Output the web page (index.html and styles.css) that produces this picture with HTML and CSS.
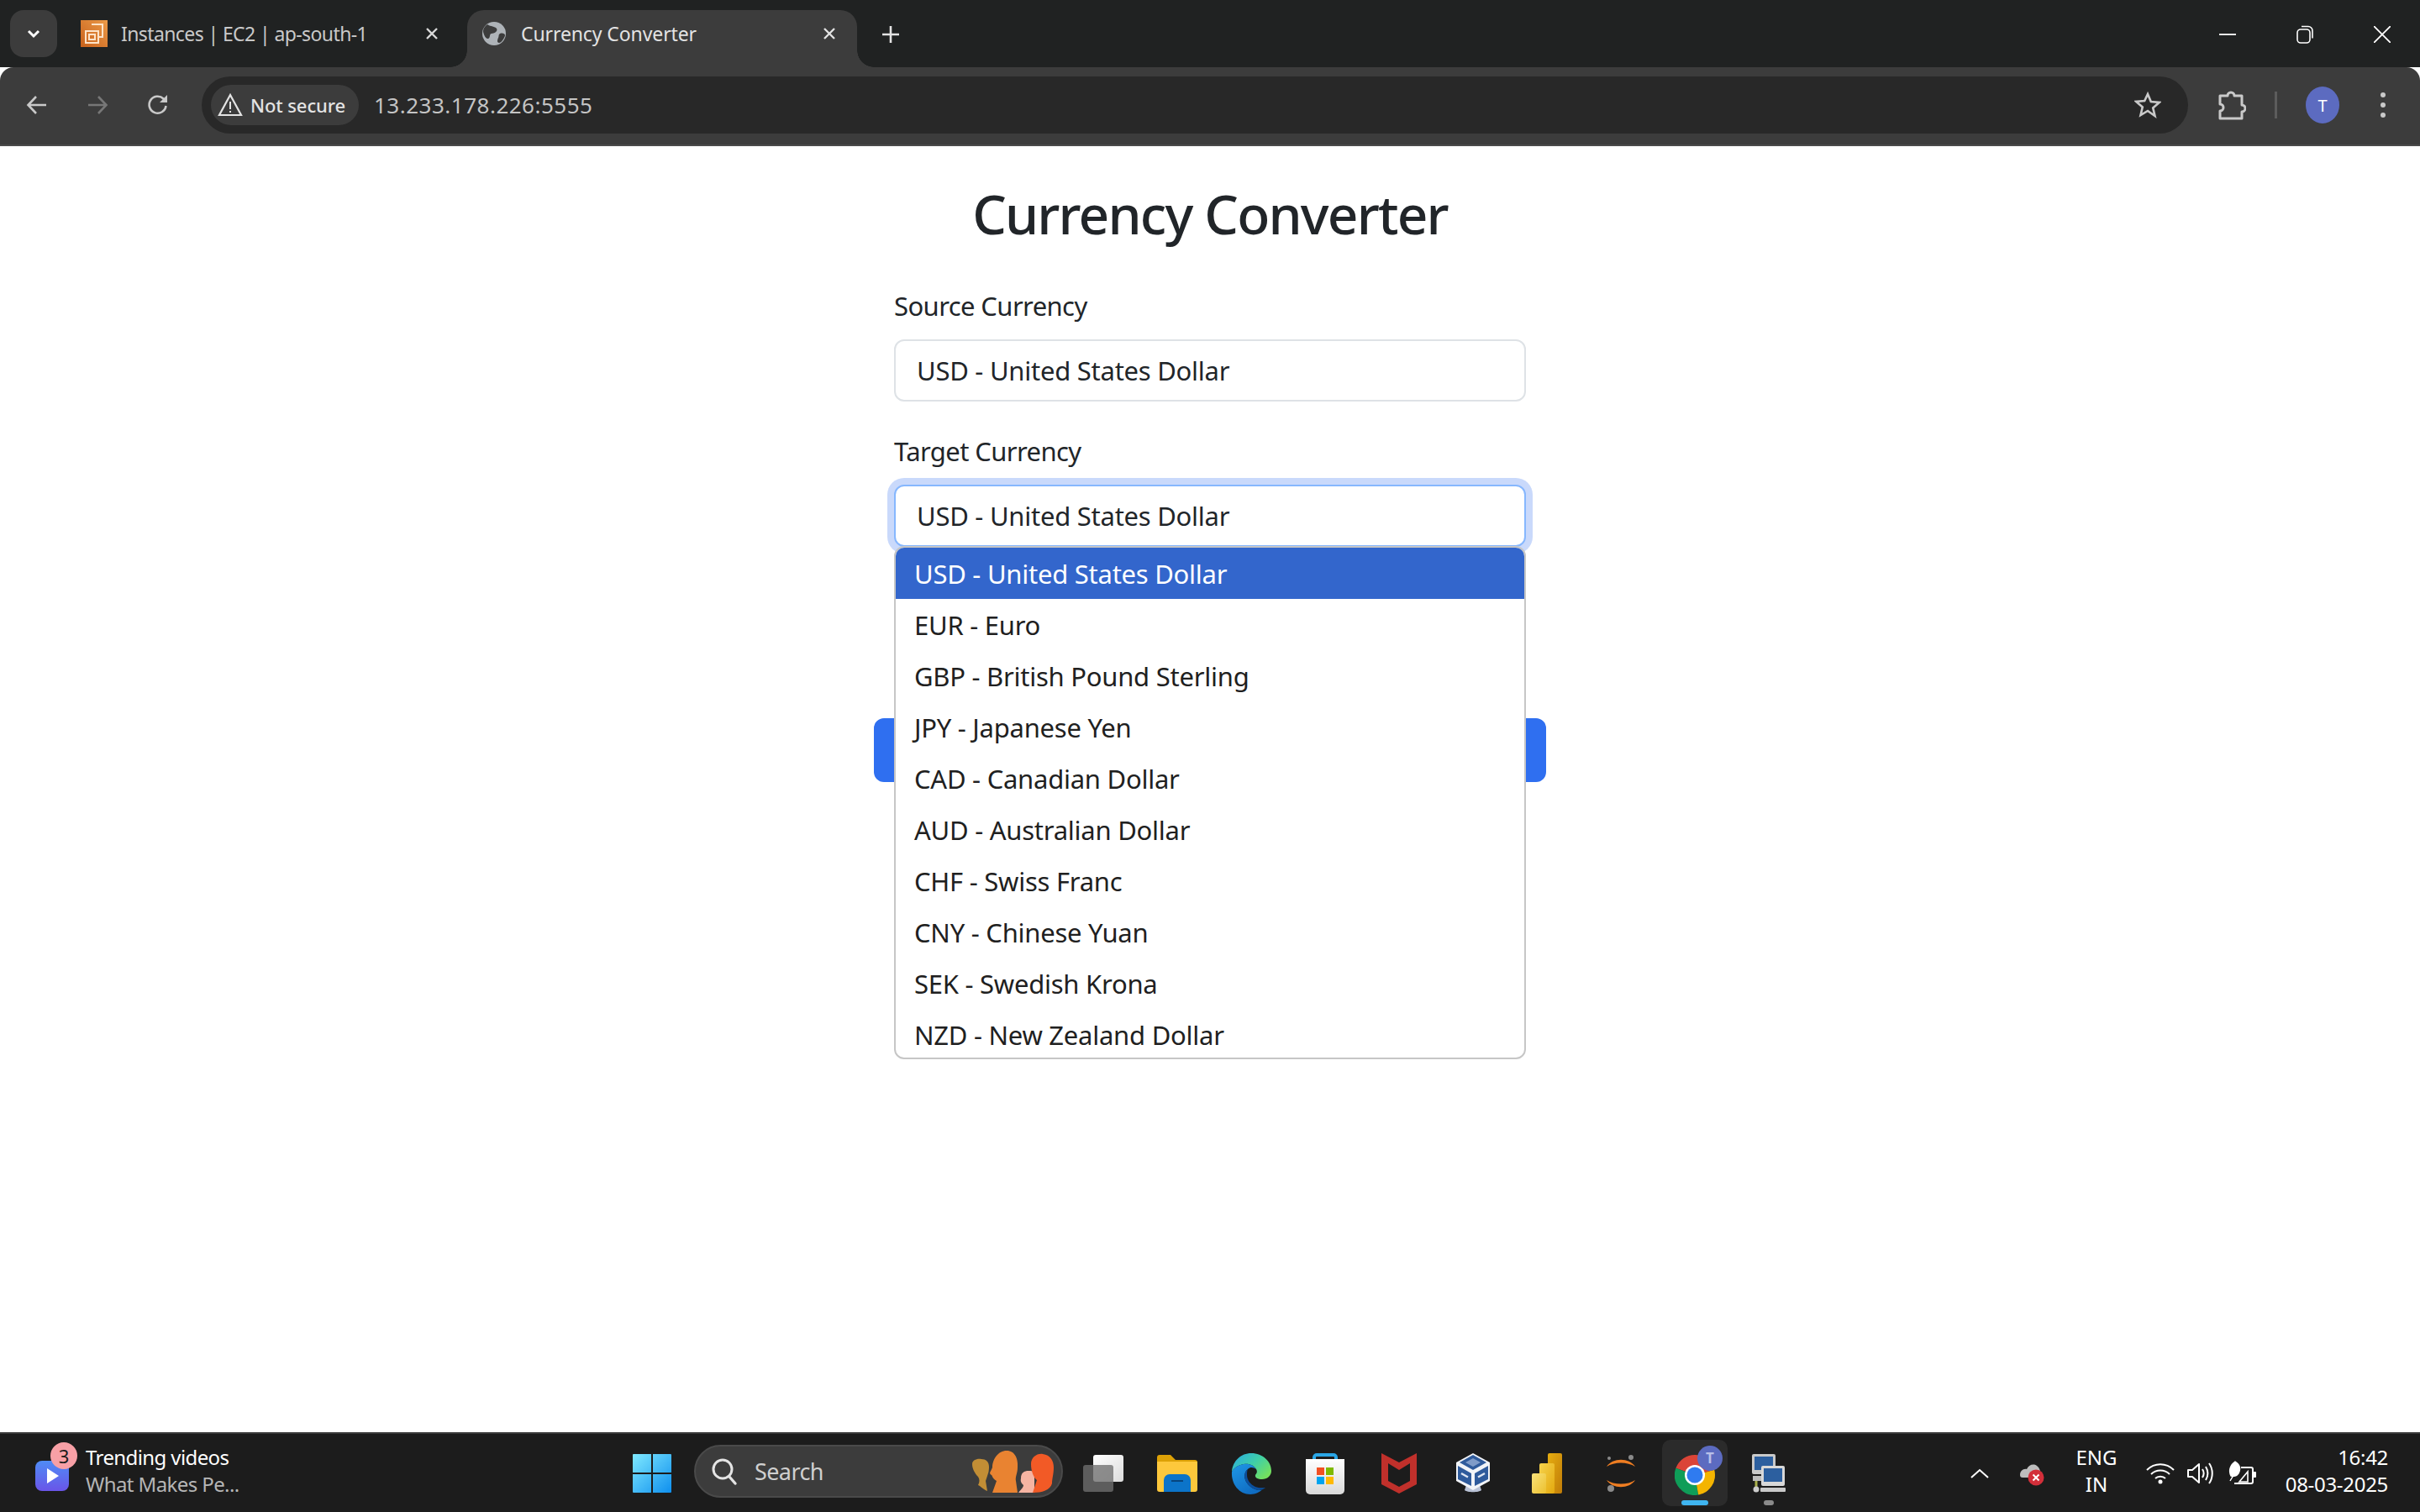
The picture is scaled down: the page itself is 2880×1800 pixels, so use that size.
FILE: index.html
```html
<!DOCTYPE html>
<html lang="en">
<head>
    <meta charset="UTF-8">
    <title>Currency Converter</title>
    <link rel="stylesheet" href="styles.css">
</head>
<body>
    <!-- browser tabs -->
    <div class="tabstrip">
        <div class="tab-search">
            <svg width="20" height="20" viewBox="0 0 20 20"><path d="M4 7l6 6 6-6" fill="none" stroke="#fff" stroke-width="3"/></svg>
        </div>
        <div class="tab">
            <svg width="32" height="32" viewBox="0 0 32 32">
                <defs><linearGradient id="aws" x1="0" y1="1" x2="1" y2="0"><stop offset="0" stop-color="#c8611b"/><stop offset="1" stop-color="#eb9a48"/></linearGradient></defs>
                <rect width="32" height="32" fill="url(#aws)"/>
                <path d="M13 5h13v15h-5M6 13h15v14H6z M10 17h7v6h-7z" fill="none" stroke="#fde3c8" stroke-width="2"/>
            </svg>
            <span class="tab-title">Instances | EC2 | ap-south-1</span>
            <svg class="tab-close" width="16" height="16" viewBox="0 0 16 16"><path d="M2 2l12 12M14 2L2 14" stroke="#d8d8d8" stroke-width="2.4"/></svg>
        </div>
        <div class="tab active">
            <svg width="28" height="28" viewBox="0 0 28 28">
                <circle cx="14" cy="14" r="14" fill="#aeb3b8"/>
                <path d="M6 3c4 3 9 2 11 5s-3 6-6 6-1 5-4 6-6-6-6-9 2-6 5-8zM21 14c3-1 6 0 6 2s-4 9-7 9-2-4-1-6 0-4 2-5z" fill="#3c3c3c"/>
            </svg>
            <span class="tab-title">Currency Converter</span>
            <svg class="tab-close" width="16" height="16" viewBox="0 0 16 16"><path d="M2 2l12 12M14 2L2 14" stroke="#e3e3e3" stroke-width="2.4"/></svg>
        </div>
        <div class="new-tab">
            <svg width="22" height="22" viewBox="0 0 22 22"><path d="M11 1v20M1 11h20" stroke="#e3e3e3" stroke-width="2.6"/></svg>
        </div>
        <div class="window-btns">
            <svg width="20" height="20" viewBox="0 0 20 20"><path d="M0 10h20" stroke="#fff" stroke-width="1.8"/></svg>
            <svg width="20" height="22" viewBox="0 0 20 22"><rect x="1" y="5" width="15" height="16" rx="4" fill="none" stroke="#fff" stroke-width="1.6"/><path d="M6 1.500h8a5 5 0 0 1 5 5v9" fill="none" stroke="#fff" stroke-width="1.6"/></svg>
            <svg width="20" height="20" viewBox="0 0 20 20"><path d="M0 0l20 20M20 0L0 20" stroke="#fff" stroke-width="1.8"/></svg>
        </div>
    </div>

    <!-- address bar -->
    <div class="toolbar">
        <div class="nav-btn">
            <svg width="26" height="26" viewBox="0 0 26 26"><path d="M24 13H3M12 3L2.500 13 12 23" fill="none" stroke="#c9c9c9" stroke-width="2.600"/></svg>
        </div>
        <div class="nav-btn">
            <svg width="26" height="26" viewBox="0 0 26 26"><path d="M2 13h21M14 3l9.500 10L14 23" fill="none" stroke="#777" stroke-width="2.600"/></svg>
        </div>
        <div class="nav-btn">
            <svg width="28" height="28" viewBox="0 0 28 28"><path d="M23.500 15a10 10 0 1 1-3-8.500L24 10" fill="none" stroke="#c9c9c9" stroke-width="2.600"/><path d="M25 2v9h-9z" fill="#c9c9c9"/></svg>
        </div>
        <div class="omnibox">
            <div class="chip">
                <svg width="30" height="28" viewBox="0 0 30 28"><path d="M15 2L2 26h26z" fill="none" stroke="#e3e3e3" stroke-width="2.200"/><path d="M15 10v9M15 21v2" stroke="#e3e3e3" stroke-width="2"/></svg>
                <span>Not secure</span>
            </div>
            <span class="url">13.233.178.226:5555</span>
            <svg class="star" width="32" height="32" viewBox="0 0 32 32"><path d="M16 3l3.800 9.100 9.900.8-7.500 6.500 2.300 9.600L16 23l-8.500 5 2.300-9.600-7.500-6.500 9.900-.8z" fill="none" stroke="#c9c9c9" stroke-width="2.600"/></svg>
        </div>
        <svg class="puzzle" width="34" height="36" viewBox="0 0 34 36"><path d="M3 7h9a4 4 0 1 1 8 0h9v11a4 4 0 1 1 0 8v8H3v-9a4 4 0 0 0 0-8z" fill="none" stroke="#c9c9c9" stroke-width="3" stroke-linejoin="round"/></svg>
        <div class="separator"></div>
        <div class="avatar">T</div>
        <div class="dots"><i></i><i></i><i></i></div>
    </div>

    <!-- the actual page -->
    <div class="page">
        <div class="container">
            <h1>Currency Converter</h1>
            <div class="field">
                <label>Source Currency</label>
                <div class="select">USD - United States Dollar</div>
            </div>
            <div class="field">
                <label>Target Currency</label>
                <div class="select focused">
                    USD - United States Dollar
                    <ul class="dropdown">
                        <li class="selected">USD - United States Dollar</li>
                        <li>EUR - Euro</li>
                        <li>GBP - British Pound Sterling</li>
                        <li>JPY - Japanese Yen</li>
                        <li>CAD - Canadian Dollar</li>
                        <li>AUD - Australian Dollar</li>
                        <li>CHF - Swiss Franc</li>
                        <li>CNY - Chinese Yuan</li>
                        <li>SEK - Swedish Krona</li>
                        <li>NZD - New Zealand Dollar</li>
                    </ul>
                </div>
            </div>
            <!-- third field and the button sit behind the open list -->
            <div class="field">
                <label class="covered"></label>
                <div class="select"></div>
            </div>
            <button class="convert"></button>
        </div>
    </div>

    <!-- windows taskbar -->
    <div class="taskbar">
        <div class="widgets">
            <div class="widget-icon">
                <svg width="40" height="36" viewBox="0 0 40 36">
                    <defs><linearGradient id="wid" x1="0" y1="0" x2="0" y2="1"><stop offset="0" stop-color="#4f8cf5"/><stop offset="1" stop-color="#6a55e8"/></linearGradient></defs>
                    <rect width="40" height="36" rx="8" fill="url(#wid)"/>
                    <path d="M14 9l14 9-14 9z" fill="#fff"/>
                </svg>
                <span class="badge">3</span>
            </div>
            <div class="widget-text">
                <span>Trending videos</span>
                <span class="dim">What Makes Pe...</span>
            </div>
        </div>

        <div class="slot">
            <svg width="46" height="46" viewBox="0 0 46 46">
                <defs><linearGradient id="win" x1="0" y1="0" x2="1" y2="1"><stop offset="0" stop-color="#7fe9ff"/><stop offset="1" stop-color="#0e8fee"/></linearGradient></defs>
                <path d="M0 1a1 1 0 0 1 1-1h21v22H0zM24 0h21a1 1 0 0 1 1 1v21H24zM0 24h22v22H1a1 1 0 0 1-1-1zM24 24h22v21a1 1 0 0 1-1 1H24z" fill="url(#win)"/>
            </svg>
        </div>

        <div class="search">
            <svg width="32" height="34" viewBox="0 0 32 34"><circle cx="14" cy="14" r="11" fill="none" stroke="#e4e4e4" stroke-width="3"/><path d="M22 23l7 8" stroke="#e4e4e4" stroke-width="3.400" stroke-linecap="round"/></svg>
            <span>Search</span>
            <svg class="people" width="102" height="50" viewBox="0 0 102 50">
                <path d="M2 16c0-5 6-7 11-6 5 0 9 3 9 9 0 6-1 8-2 11l-2 6 2 12c-5-2-8-6-11-7 2-4 2-7 0-10-4-4-7-10-7-15z" fill="#c28e35"/>
                <path d="M26 20c0-10 7-20 17-20s14 10 13 20c0 7-3 11-2 16l2 14H26l5-14c-3-2-4-3-5-5 0-2-2-2-3-4 0-2 2-4 3-7z" fill="#e98331"/>
                <path d="M60 33c0-7 4-9 9-9 2 0 6 0 7 2v24H57c2-3 6-6 6-9-2-2-4-4-3-8z" fill="#f6b4a2"/>
                <path d="M72 16c0-8 7-13 14-12 9 1 13 8 13 16 0 8-2 13-2 19-2 8-12 11-23 11l5-15c-4-3-7-11-7-19z" fill="#f25a26"/>
            </svg>
        </div>

        <div class="slot">
            <svg width="48" height="44" viewBox="0 0 48 44">
                <defs><linearGradient id="tv" x1="0" y1="0" x2="1" y2="1"><stop offset="0" stop-color="#fff"/><stop offset="1" stop-color="#dcdcdc"/></linearGradient></defs>
                <rect x="12" width="36" height="32" rx="3" fill="url(#tv)"/>
                <rect y="12" width="36" height="32" rx="3" fill="#707070" fill-opacity=".78"/>
            </svg>
        </div>
        <div class="slot">
            <svg width="48" height="44" viewBox="0 0 48 44">
                <path d="M0 3a3 3 0 0 1 3-3h13l6 6h23a3 3 0 0 1 3 3v6H0z" fill="#dda106"/>
                <path d="M0 8h48v33a3 3 0 0 1-3 3H3a3 3 0 0 1-3-3z" fill="#fdc83c"/>
                <path d="M8 44V30a7 7 0 0 1 7-7h18a7 7 0 0 1 7 7v14z" fill="#0c74c9"/>
                <path d="M17 31h14" stroke="#07467f" stroke-width="2"/>
            </svg>
        </div>
        <div class="slot">
            <svg width="48" height="50" viewBox="0 0 48 50">
                <defs>
                    <linearGradient id="edgeA" x1="0" y1="0" x2="1" y2=".7"><stop offset="0" stop-color="#27a9e4"/><stop offset=".55" stop-color="#3fcfa8"/><stop offset="1" stop-color="#74e05e"/></linearGradient>
                    <linearGradient id="edgeB" x1="0" y1="0" x2=".6" y2="1"><stop offset="0" stop-color="#1f97e6"/><stop offset="1" stop-color="#0f6cc2"/></linearGradient>
                </defs>
                <path d="M1 23C2 10 12 1 24 1c14 0 24 10 24 21 0 6-5 10-11 10-5 0-9-2-8-5 1-2 3-3 1-7-3-5-9-7-15-6C9 15 4 18 1 23z" fill="url(#edgeA)"/>
                <path d="M1 23c3-5 8-8 14-9 6-1 12 1 15 6-3-2-7-3-10 0-4 3-5 9-2 15 3 5 8 9 15 10 2 0 4 0 5-1-4 3-9 6-15 6C10 50 0 38 1 23z" fill="url(#edgeB)"/>
                <path d="M20 20c-4 3-5 9-2 15 3 5 8 9 15 10 2 0 6-1 8-3-3 0-7 1-12-1-6-3-10-8-10-14 0-3 0-5 1-7z" fill="#0b4f9e"/>
                <path d="M16 26c0-5 4-8 9-7 3 1 5 3 4 7-5 0-8 0-13 0z" fill="#1c1c1c" fill-opacity="0"/>
            </svg>
        </div>
        <div class="slot">
            <svg width="46" height="50" viewBox="0 0 46 50">
                <defs><linearGradient id="bag" x1="0" y1="0" x2="0" y2="1"><stop offset="0" stop-color="#fff"/><stop offset="1" stop-color="#d9d9d9"/></linearGradient></defs>
                <path d="M10 10V6a3 3 0 0 1 3-3h20a3 3 0 0 1 3 3v4" fill="none" stroke="#2aa6e6" stroke-width="4"/>
                <path d="M0 8h46v37a5 5 0 0 1-5 5H5a5 5 0 0 1-5-5z" fill="url(#bag)"/>
                <rect x="13" y="18" width="9" height="9" fill="#f25022"/>
                <rect x="24" y="18" width="9" height="9" fill="#7fba00"/>
                <rect x="13" y="29" width="9" height="9" fill="#00a4ef"/>
                <rect x="24" y="29" width="9" height="9" fill="#ffb900"/>
            </svg>
        </div>
        <div class="slot">
            <svg width="42" height="48" viewBox="0 0 42 48"><path d="M0 0l21 11L42 0v37L21 48 0 37zM8 12v21l13 7 13-7V12L21 20z" fill="#c0302b" fill-rule="evenodd"/></svg>
        </div>
        <div class="slot">
            <svg width="40" height="48" viewBox="0 0 40 48">
                <path d="M12 38h16l2 6c-3 3-17 3-20 0z" fill="#b9c2d6"/>
                <path d="M20 0l20 11v22L20 44 0 33V11z" fill="#f2f4f8"/>
                <path d="M20 2l16 9-16 9-16-9z" fill="#2f5b9c"/>
                <path d="M20 6l9 5-9 5-9-5z" fill="#7f9bc8"/>
                <path d="M2 15l16 9v15L2 31zM38 15l-16 9v15l16-8z" fill="#2f5b9c"/>
                <path d="M6 24l8 4.500M26 28.500l8-4.500" stroke="#dfe6f2" stroke-width="2.500"/>
            </svg>
        </div>
        <div class="slot">
            <svg width="36" height="48" viewBox="0 0 36 48">
                <defs>
                    <linearGradient id="pbiA" x1="0" y1="0" x2="1" y2="1"><stop offset="0" stop-color="#e6ad10"/><stop offset="1" stop-color="#c07c08"/></linearGradient>
                    <linearGradient id="pbiB" x1="0" y1="0" x2="1" y2="1"><stop offset="0" stop-color="#f6d34c"/><stop offset="1" stop-color="#e3a80e"/></linearGradient>
                    <linearGradient id="pbiC" x1="0" y1="0" x2="1" y2="1"><stop offset="0" stop-color="#f9e27a"/><stop offset="1" stop-color="#ecc02e"/></linearGradient>
                </defs>
                <rect x="19" width="17" height="48" rx="2" fill="url(#pbiA)"/>
                <rect x="9" y="12" width="18" height="36" rx="2" fill="url(#pbiB)"/>
                <rect y="24" width="17" height="24" rx="2" fill="url(#pbiC)"/>
            </svg>
        </div>
        <div class="slot">
            <svg width="36" height="44" viewBox="0 0 36 44">
                <path d="M1 14C8 3 28 3 35 14 26 8 10 8 1 14zM1 30c7 11 27 11 34 0-9 6-25 6-34 0z" fill="#ee7d22"/>
                <circle cx="4" cy="4" r="2" fill="#8a8a8a"/><circle cx="30" cy="3" r="3" fill="#8a8a8a"/><circle cx="6" cy="40" r="4" fill="#8a8a8a"/>
            </svg>
        </div>
        <div class="slot running">
            <div class="tile">
                <svg class="chrome" width="58" height="60" viewBox="0 -8 58 60">
                    <path d="M24 28L1.400 19.800A24 24 0 0 1 47.200 21.800z" fill="#db4437"/>
                    <path d="M24 28L28.200 51.600A24 24 0 0 1 1.400 19.800z" fill="#0f9d58"/>
                    <path d="M24 28L47.200 21.800A24 24 0 0 1 28.200 51.600z" fill="#f4b400"/>
                    <circle cx="24" cy="28" r="12" fill="#fff"/>
                    <circle cx="24" cy="28" r="9.500" fill="#2f7bf0"/>
                    <circle cx="42" cy="8" r="15" fill="#5c6bc0"/>
                    <text x="42" y="14" class="tile-t">T</text>
                </svg>
                <i class="run-mark"></i>
            </div>
        </div>
        <div class="slot running">
            <svg width="40" height="46" viewBox="0 0 40 46">
                <rect x="0" y="0" width="28" height="24" rx="2" fill="#c9c9c9"/>
                <rect x="3" y="3" width="22" height="16" fill="#2c5f9f"/>
                <rect x="1" y="26" width="20" height="6" fill="#bdbdbd"/>
                <path d="M5 32v10" stroke="#a9b04a" stroke-width="3"/>
                <circle cx="5" cy="42" r="3.500" fill="#ccc"/>
                <rect x="11" y="14" width="28" height="24" rx="2" fill="#d8d8d8"/>
                <rect x="14" y="17" width="22" height="16" fill="#2c5f9f"/>
                <rect x="10" y="40" width="30" height="5" rx="1" fill="#c9c9c9"/>
            </svg>
            <i class="run-mark idle"></i>
        </div>

        <div class="tray">
            <svg class="tray-up" width="22" height="12" viewBox="0 0 22 12"><path d="M1 11l10-9 10 9" fill="none" stroke="#fff" stroke-width="2"/></svg>
            <svg class="tray-cloud" width="34" height="30" viewBox="0 0 34 30">
                <path d="M3 17c0-5 4-8 8-7 2-5 8-7 12-4 3 2 4 5 4 8v6H6c-2 0-3-1-3-3z" fill="#bdbdbd"/>
                <circle cx="22" cy="20" r="9.500" fill="#d32f3a"/>
                <path d="M18.500 16.500l7 7M25.500 16.500l-7 7" stroke="#fff" stroke-width="2"/>
            </svg>
            <div class="lang"><span>ENG</span><span>IN</span></div>
            <svg class="tray-wifi" width="34" height="26" viewBox="0 0 34 26"><path d="M1 9c9-9 23-9 32 0M6 14c6-6 16-6 22 0M11 19c3-3 9-3 12 0" fill="none" stroke="#fff" stroke-width="2"/><circle cx="17" cy="23" r="2.500" fill="#fff"/></svg>
            <svg class="tray-vol" width="32" height="28" viewBox="0 0 32 28"><path d="M1 10h5l8-7v22l-8-7H1z" fill="none" stroke="#fff" stroke-width="2" stroke-linejoin="round"/><path d="M18 9c2 3 2 7 0 10M22 6c3 5 3 11 0 16M26 2c5 7 5 17 0 24" fill="none" stroke="#fff" stroke-width="2"/></svg>
            <svg class="tray-bat" width="34" height="30" viewBox="0 0 34 30"><path d="M9 1c5 3 7 8 4 14-2 3-6 4-9 3C1 12 3 5 9 1zM3 24c3-6 5-8 7-10" fill="#fff" stroke="#fff" stroke-width="1.400"/><path d="M16 8h12a2 2 0 0 1 2 2v15a2 2 0 0 1-2 2H8" fill="none" stroke="#fff" stroke-width="2"/><path d="M14 25l10-12v12z" fill="none" stroke="#fff" stroke-width="1.600"/><rect x="30.500" y="13" width="3.500" height="7" rx="1" fill="#fff"/></svg>
            <div class="clock"><span>16:42</span><span>08-03-2025</span></div>
        </div>
    </div>
</body>
</html>
```
FILE: styles.css
```css
* {
    box-sizing: border-box;
}
body {
    margin: 0;
    width: 2880px;
    height: 1800px;
    overflow: hidden;
    display: flex;
    flex-direction: column;
    font-family: "Noto Sans", sans-serif;
    background-color: #fff;
    color: #212529;
}

/* tabs */
.tabstrip {
    height: 80px;
    flex: none;
    display: flex;
    align-items: flex-start;
    padding-top: 12px;
    background-color: #202222;
    color: #c9c9c9;
    font-size: 23px;
}
.tab-search {
    width: 56px;
    height: 56px;
    margin-left: 12px;
    border-radius: 16px;
    background-color: #3c3c3c;
    display: flex;
    align-items: center;
    justify-content: center;
}
.tab {
    width: 488px;
    height: 68px;
    padding: 0 34px 12px 28px;
    display: flex;
    align-items: center;
}
.tab-title {
    margin-left: 16px;
    letter-spacing: -0.6px;
    white-space: nowrap;
}
.tab-close {
    margin-left: auto;
}
.tab.active {
    position: relative;
    width: 464px;
    padding: 0 25px 12px 18px;
    border-radius: 20px 20px 0 0;
    background-color: #3c3c3c;
    color: #e3e3e3;
}
.tab.active .tab-title {
    margin-left: 18px;
    letter-spacing: -0.1px;
}
.tab.active::before,
.tab.active::after {
    content: "";
    position: absolute;
    bottom: 0;
    width: 20px;
    height: 20px;
}
.tab.active::before {
    left: -20px;
    background: radial-gradient(circle at 0 0, #202222 19.500px, #3c3c3c 20px);
}
.tab.active::after {
    right: -20px;
    background: radial-gradient(circle at 100% 0, #202222 19.500px, #3c3c3c 20px);
}
.new-tab {
    margin: 18px 0 0 29px;
    display: flex;
}
.window-btns {
    margin: 18px 35px 0 auto;
    display: flex;
    gap: 72px;
    align-items: center;
}

/* address bar */
.toolbar {
    height: 94px;
    flex: none;
    display: flex;
    align-items: center;
    padding: 0 26px 2px 8px;
    background-color: #3c3c3c;
    border-bottom: 2px solid #4a4a4a;
    border-radius: 16px 16px 0 0;
}
.nav-btn {
    width: 72px;
    display: flex;
    justify-content: center;
}
.omnibox {
    width: 2364px;
    height: 68px;
    margin-left: 16px;
    padding: 0 32px 0 11px;
    border-radius: 34px;
    background-color: #282828;
    display: flex;
    align-items: center;
}
.chip {
    height: 48px;
    width: 176px;
    padding-left: 8px;
    border-radius: 24px;
    background-color: #3c3c3c;
    color: #e3e3e3;
    font-size: 22px;
    font-weight: 500;
    letter-spacing: -0.1px;
    display: flex;
    align-items: center;
    gap: 9px;
    white-space: nowrap;
}
.url {
    margin-left: 18px;
    font-size: 26px;
    color: #c4c4c4;
    letter-spacing: 0.5px;
}
.star {
    margin-left: auto;
}
.puzzle {
    margin-left: 35px;
}
.separator {
    width: 3px;
    height: 32px;
    margin-left: 34px;
    background-color: #5c5c5c;
}
.avatar {
    width: 40px;
    height: 44px;
    margin-left: 34px;
    border-radius: 50%;
    background-color: #5c6bc0;
    color: #fff;
    font-size: 20px;
    display: flex;
    align-items: center;
    justify-content: center;
}
.dots {
    margin-left: 49px;
    display: flex;
    flex-direction: column;
    gap: 6px;
}
.dots i {
    width: 6px;
    height: 6px;
    border-radius: 50%;
    background-color: #c9c9c9;
}

/* page content */
.page {
    flex: 1;
    min-height: 0;
}
.container {
    width: 800px;
    margin: 0 auto;
}
h1 {
    margin: 41px 0 49px;
    font-size: 64px;
    line-height: 80px;
    font-weight: 500;
    text-align: center;
    letter-spacing: -1.8px;
}
.field {
    margin: 0 24px 39px;
}
label {
    display: block;
    height: 40px;
    margin-bottom: 20px;
    font-size: 31px;
    line-height: 40px;
    letter-spacing: -0.6px;
}
label.covered::before {
    content: "";
    display: block;
    width: 2px;
    height: 6px;
    position: relative;
    top: 25px;
    background-color: #555;
}
.select {
    position: relative;
    height: 74px;
    padding: 0 25px;
    border: 2px solid #dee2e6;
    border-radius: 12px;
    background-color: #fff;
    font-size: 31px;
    line-height: 71px;
    letter-spacing: -0.25px;
}
.select.focused {
    border-color: #86b7fe;
    box-shadow: 0 0 0 8px #c9d9fb;
}
.dropdown {
    position: absolute;
    z-index: 2;
    top: 71px;
    left: -2px;
    right: -2px;
    height: 611px;
    margin: 0;
    padding: 0;
    overflow: hidden;
    list-style: none;
    background-color: #fff;
    border: 2px solid #c6c6c6;
    border-radius: 12px;
    color: #202020;
}
.dropdown li {
    height: 61px;
    padding: 0 22px;
    line-height: 62px;
}
.dropdown li.selected {
    background-color: #3366cc;
    color: #fff;
}
.convert {
    display: block;
    width: 800px;
    height: 76px;
    margin-top: -8px;
    border: 0;
    border-radius: 12px;
    background-color: #2f6ff0;
}

/* taskbar */
.taskbar {
    height: 95px;
    flex: none;
    display: flex;
    align-items: center;
    border-top: 2px solid #3a3a3a;
    background-color: #1c1c1c;
    color: #fff;
    font-size: 24px;
}
.widgets {
    width: 732px;
    padding-left: 42px;
    display: flex;
    align-items: center;
    gap: 20px;
}
.widget-icon {
    position: relative;
    display: flex;
    margin-top: 6px;
}
.badge {
    position: absolute;
    top: -22px;
    right: -10px;
    width: 32px;
    height: 32px;
    border-radius: 50%;
    background-color: #f8a0a6;
    color: #1c1c1c;
    font-size: 22px;
    line-height: 32px;
    text-align: center;
}
.widget-text {
    display: flex;
    flex-direction: column;
    margin-top: -6px;
    line-height: 32px;
    letter-spacing: -0.6px;
    white-space: nowrap;
}
.dim {
    color: #b5b5b5;
}
.slot {
    width: 88px;
    height: 93px;
    flex: none;
    display: flex;
    align-items: center;
    justify-content: center;
}
.search {
    width: 439px;
    height: 63px;
    margin: 0 4px 4px 6px;
    flex: none;
    padding: 0 6px 0 18px;
    border-radius: 32px;
    background-color: #3c3c3c;
    border: 2px solid #4a4a4a;
    color: #cfcfcf;
    font-size: 27px;
    display: flex;
    align-items: center;
}
.search span {
    margin-left: 20px;
    letter-spacing: -0.6px;
}
.people {
    margin-left: auto;
}
.running {
    position: relative;
}
.tile {
    position: relative;
    width: 78px;
    height: 79px;
    padding-left: 15px;
    border-radius: 10px;
    background-color: #2b2b2b;
    display: flex;
    align-items: center;
}
.chrome {
    margin-bottom: 8px;
}
.tile-t {
    fill: #b9c0e8;
    font-size: 17px;
    font-weight: 700;
    text-anchor: middle;
}
.run-mark {
    position: absolute;
    bottom: 1px;
    left: 23px;
    width: 32px;
    height: 6px;
    border-radius: 3px;
    background-color: #3fb5f0;
}
.run-mark.idle {
    bottom: 8px;
    left: 38px;
    width: 12px;
    background-color: #8a8a8a;
}
.tray {
    margin-left: auto;
    padding-right: 38px;
    display: flex;
    align-items: center;
}
.tray-cloud {
    margin-left: 34px;
}
.lang {
    width: 46px;
    margin-left: 37px;
    display: flex;
    flex-direction: column;
    align-items: center;
    margin-top: -6px;
    line-height: 32px;
}
.tray-wifi {
    margin-left: 36px;
}
.tray-vol {
    margin-left: 15px;
}
.tray-bat {
    margin-left: 16px;
}
.clock {
    width: 157px;
    display: flex;
    flex-direction: column;
    align-items: flex-end;
    margin-top: -6px;
    line-height: 32px;
    letter-spacing: -0.3px;
}
```
